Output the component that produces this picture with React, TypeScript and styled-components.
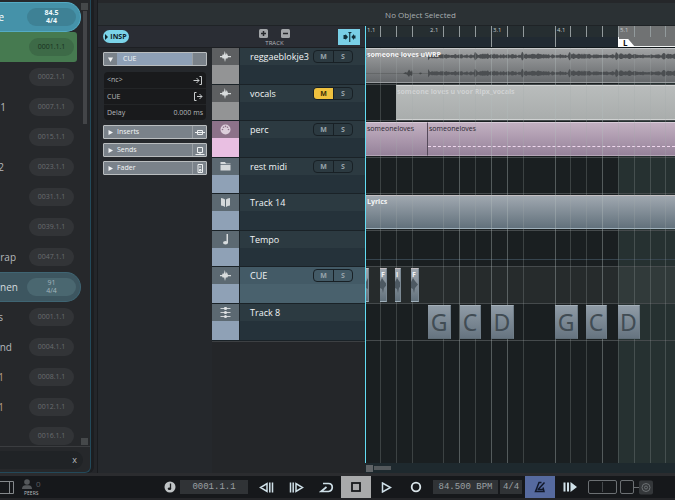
import React from "react";
import styled, { createGlobalStyle, css } from "styled-components";

const GlobalStyle = createGlobalStyle`
  * { box-sizing: border-box; }
  body { margin: 0; background: #24262a; color: #d6dade; font-family: "Open Sans", "Noto Sans", sans-serif; font-size: 9px; line-height: 12px; }
  button, input { font: inherit; color: inherit; margin: 0; padding: 0; border: 0; background: none; }
  button { cursor: pointer; }
  svg { display: block; flex: none; }
`;

/* ---------- shell ---------- */
const Shell = styled.div`
  display: flex;
  flex-direction: column;
  min-height: 100vh;
  overflow: hidden;
`;
const Body = styled.div`
  display: flex;
  flex: 1;
`;
const Main = styled.main`
  display: flex;
  flex-direction: column;
  flex: 1;
  min-width: 0;
  border-left: 1px solid #191b1e;
`;

/* ---------- set list ---------- */
const SetList = styled.aside`
  display: flex;
  flex-direction: column;
  width: 91px;
  margin-right: 6px;
  border: solid #23495a;
  border-width: 0 1px 1px 0;
  border-radius: 0 0 6px 0;
  background: #26282b;
  box-shadow: 3px 0 0 #1c1e21;
`;
const SetBody = styled.div`
  display: flex;
  flex: 1;
`;
const Songs = styled.ul`
  display: flex;
  flex-direction: column;
  width: 81px;
  margin: 0;
  padding: 2px 0 0;
  list-style: none;
`;
const Song = styled.li<{ $kind?: "active" | "next" | "part" }>`
  display: flex;
  align-items: center;
  justify-content: space-between;
  height: 30px;
  padding-right: 7px;
  &:last-child {
    align-items: flex-end;
    height: 23px;
  }
  ${(p) =>
    p.$kind === "active" || p.$kind === "part"
      ? css`
          padding-right: 4px;
          border-radius: 0 15px 15px 0;
          border: 1px solid ${p.$kind === "active" ? "#54abc4" : "#3f6573"};
          border-left: 0;
          background: ${p.$kind === "active" ? "#4592a9" : "#3d5660"};
        `
      : ""}
  ${(p) =>
    p.$kind === "next" &&
    css`
      margin-right: 4px;
      padding-right: 3px;
      border-radius: 0 3px 3px 0;
      background: #467a50;
    `}
`;
const SongName = styled.span<{ $w: number; $tone?: string }>`
  display: flex;
  justify-content: flex-end;
  width: ${(p) => p.$w}px;
  overflow: hidden;
  white-space: nowrap;
  font-size: 10px;
  line-height: 14px;
  color: ${(p) => p.$tone ?? "#b4b8bb"};
`;
const Pill = styled.span<{ $kind?: string }>`
  display: flex;
  align-items: center;
  justify-content: center;
  width: 45px;
  height: 18px;
  border-radius: 9px;
  background: ${(p) => (p.$kind === "next" ? "#3d6a47" : "#323437")};
  color: ${(p) => (p.$kind === "next" ? "#18301e" : "#696c6f")};
  font-size: 7px;
  line-height: 8px;
  text-align: center;
  white-space: pre-line;
  ${(p) =>
    (p.$kind === "active" || p.$kind === "part") &&
    css`
      width: 49px;
      background: ${p.$kind === "active" ? "#3e8195" : "#4a6770"};
      color: ${p.$kind === "active" ? "#f0fafc" : "#a3b6bd"};
      font-weight: ${p.$kind === "active" ? 700 : 400};
    `}
`;
const SetScroll = styled.div`
  display: flex;
  flex-direction: column;
  align-items: center;
  justify-content: space-between;
  width: 7px;
  padding: 3px 0 1px;
`;
const ScrollTop = styled.div`
  display: flex;
  flex-direction: column;
  align-items: center;
  gap: 1px;
`;
const Knob = styled.span`
  width: 7px;
  height: 7px;
  background: #45484a;
`;
const Thumb = styled.span`
  width: 4px;
  height: 113px;
  background: #434548;
`;
const SetFooter = styled.div`
  border-top: 1px solid #3b3d40;
  padding: 4px 7px 3px 0;
  height: 26px;
`;
const ClearBox = styled.div`
  display: flex;
  align-items: center;
  justify-content: flex-end;
  height: 18px;
  padding-right: 6px;
  border-radius: 0 9px 9px 0;
  background: #202326;
  color: #b8bcbf;
`;

/* ---------- header ---------- */
const InfoLine = styled.header`
  display: flex;
  align-items: center;
  justify-content: center;
  height: 26px;
  padding: 2px 0 0 68px;
  border-top: 3px solid #25272a;
  border-bottom: 1px solid #1f2326;
  background: #2b3134;
  color: #a9afb1;
  font-size: 8px;
`;
const Workspace = styled.div`
  display: flex;
  flex: 1;
`;
const ToolStrip = styled.div`
  display: flex;
  align-items: center;
  height: 22px;
  border-bottom: 1px solid #1d1f23;
  background: #2a2d34;
`;

/* ---------- inspector ---------- */
const Inspector = styled.section`
  display: flex;
  flex-direction: column;
  width: 114px;
  background: #25282c;
`;
const InspToggle = styled.button`
  display: flex;
  align-items: center;
  justify-content: center;
  gap: 2px;
  width: 26px;
  height: 13px;
  margin-left: 5px;
  border-radius: 7px;
  background: #7bd3e8;
  color: #0f2228;
  font-size: 7px;
  font-weight: 700;
`;
const InspBody = styled.div`
  display: flex;
  flex-direction: column;
  gap: 4px;
  padding: 4px 5px 0;
`;
const Section = styled.button`
  display: flex;
  align-items: stretch;
  height: 14px;
  border: 1px solid #b9bdbf;
  border-radius: 1px;
  background: #7a828a;
  color: #f2f5f6;
  font-size: 7px;
  line-height: 12px;
`;
const SectionArrow = styled.span`
  display: flex;
  align-items: center;
  justify-content: center;
  width: 13px;
`;
const SectionName = styled.span<{ $open?: boolean }>`
  flex: 1;
  padding-left: ${(p) => (p.$open ? 6 : 0)}px;
  text-align: left;
  background: ${(p) => (p.$open ? "#8ea0b6" : "none")};
`;
const SectionEnd = styled.span`
  display: flex;
  align-items: center;
  justify-content: center;
  width: 14px;
  border-left: 1px solid #9aa0a5;
`;
const Routing = styled.div`
  display: flex;
  flex-direction: column;
  margin: 2px 1px 1px;
  border-radius: 4px;
  background: #191a1c;
  color: #b6b9bb;
  font-size: 7px;
`;
const Route = styled.div`
  display: flex;
  align-items: center;
  justify-content: space-between;
  height: 16px;
  padding: 0 3px;
  & + & { border-top: 1px solid #232527; }
`;

/* ---------- track list ---------- */
const TrackColumn = styled.section`
  display: flex;
  flex-direction: column;
  width: 153px;
  background: #242629;
`;
const TrackTools = styled(ToolStrip)`
  justify-content: space-between;
  padding: 0 5px 0 47px;
`;
const AddRemove = styled.div`
  display: flex;
  flex-direction: column;
  align-items: center;
  gap: 2px;
  padding-top: 2px;
  color: #b2b5b9;
  font-size: 6px;
  line-height: 7px;
`;
const AddRow = styled.div`
  display: flex;
  gap: 13px;
`;
const FollowButton = styled.button`
  display: flex;
  align-items: center;
  justify-content: center;
  width: 22px;
  height: 16px;
  background: #79cfe6;
`;
const Rows = styled.div`
  display: grid;
  grid-template-rows: 37px 36px 37px 36px 37px 36px 37px 37px;
  border-bottom: 1px solid #3d4043;
`;
const TrackRow = styled.div`
  display: flex;
  border-bottom: 1px solid #1a2227;
`;
const TypeCell = styled.div<{ $top: string; $bottom: string }>`
  display: flex;
  justify-content: center;
  width: 28px;
  padding-top: 3px;
  border-right: 1px solid #1c2429;
  background: linear-gradient(${(p) => p.$top} 0 17px, ${(p) => p.$bottom} 17px);
`;
const TrackInfo = styled.div<{ $selected?: boolean }>`
  display: flex;
  align-items: flex-start;
  justify-content: space-between;
  flex: 1;
  padding: 2px 12px 0 10px;
  background: ${(p) =>
    p.$selected
      ? "linear-gradient(#435a66 0 17px, #49616d 17px)"
      : "linear-gradient(#2c3a41 0 17px, #25323a 17px)"};
  color: #f0f3f4;
`;
const TrackName = styled.span`
  line-height: 13px;
`;
const MuteSolo = styled.div`
  display: flex;
  height: 13px;
  border: 1px solid #182025;
  border-radius: 4px;
  overflow: hidden;
`;
const MSButton = styled.button<{ $on?: boolean }>`
  width: 19px;
  background: ${(p) => (p.$on ? "#efc13e" : "transparent")};
  color: ${(p) => (p.$on ? "#3c2f08" : "#98a3aa")};
  font-size: 7px;
  font-weight: 700;
  line-height: 11px;
  & + & { border-left: 1px solid #182025; }
`;

/* ---------- timeline ---------- */
const Timeline = styled.section`
  display: flex;
  flex-direction: column;
  flex: 1;
  min-width: 0;
`;
const Canvas = styled.div`
  position: relative;
  flex: 1;
  overflow: hidden;
  border-left: 1px solid #62dcf2;
  background: #1a1f21;
`;
const RulerBand = styled.div`
  height: 22px;
  border-bottom: 1px solid #11181b;
  background: linear-gradient(#262e31 0 11px, #212a32 11px);
`;
const CycleRuler = styled.div`
  position: absolute;
  top: 0;
  left: 252px;
  right: 0;
  height: 21px;
  border-left: 1px solid #fff;
  border-bottom: 1px solid #f2f4f4;
  background: #707273;
`;
const CycleArea = styled.div`
  position: absolute;
  top: 22px;
  bottom: 0;
  left: 252px;
  right: 0;
  background: #263131;
`;
const Locator = styled.div`
  position: absolute;
  top: 13px;
  left: 252px;
  width: 17px;
  height: 8px;
  padding-left: 5px;
  background: #fff;
  clip-path: polygon(0 0, 60% 0, 100% 100%, 0 100%);
  color: #111;
  font-size: 8px;
  font-weight: 700;
  line-height: 8px;
`;
const BarLabel = styled.span<{ $x: number }>`
  position: absolute;
  top: 0;
  left: ${(p) => p.$x}px;
  color: #c3c9cb;
  font-size: 6px;
  line-height: 9px;
`;
const Tick = styled.i<{ $x: number; $tall?: boolean }>`
  position: absolute;
  top: 0;
  left: ${(p) => p.$x}px;
  width: 1px;
  height: ${(p) => (p.$tall ? 21 : 11)}px;
  background: #929a9c;
`;
const GridLine = styled.i<{ $x: number; $strong?: boolean }>`
  position: absolute;
  top: 22px;
  bottom: 0;
  left: ${(p) => p.$x}px;
  width: 1px;
  background: ${(p) => (p.$strong ? "rgba(180,188,188,0.38)" : "rgba(165,173,173,0.25)")};
`;
const Lane = styled.div<{ $y: number; $h: number; $selected?: boolean }>`
  position: absolute;
  top: ${(p) => p.$y}px;
  left: 0;
  right: 0;
  height: ${(p) => p.$h}px;
  border-bottom: 1px solid #454a4c;
  background: ${(p) => (p.$selected ? "rgba(120,125,125,0.13)" : "none")};
`;
const fills = {
  audio: css`background: linear-gradient(#a0a2a3, #65686b); border-color: #c7c9ca #83878a #9a9da0; color: #f4f4f4;`,
  pale: css`background: linear-gradient(#b9bcbc, #a9adac); border-color: #d3d5d5 #c9cccc #cfd1d1; color: #d0d2d3;`,
  pink: css`background: linear-gradient(#c2b0c1, #96829a); border-color: #d9ccd9 #55495a #b5a4b6; color: #2b2530;`,
  steel: css`background: linear-gradient(#a0a8b0, #62717c); border-color: #c4bfc2 #7b8994 #9fb0bb; color: #f2f4f5;`,
  chord: css`background: linear-gradient(#8f9ba6, #667480); border-color: #a4afb8 #6f7d88 #5e6c76; color: #414c54;`,
};
const Clip = styled.div<{ $x: number; $y: number; $w?: number; $h?: number; $fill: keyof typeof fills }>`
  position: absolute;
  left: ${(p) => p.$x}px;
  top: ${(p) => p.$y}px;
  height: ${(p) => p.$h ?? 34}px;
  ${(p) => (p.$w ? `width: ${p.$w}px; border-width: 1px 1px 1px 0;` : "right: 0; border-width: 1px 0;")}
  border-style: solid;
  overflow: hidden;
  ${(p) => fills[p.$fill]}
`;
const ClipName = styled.span<{ $bold?: boolean }>`
  position: absolute;
  top: 1px;
  left: 1px;
  font-size: 7px;
  line-height: 10px;
  font-weight: ${(p) => (p.$bold ? 700 : 500)};
  white-space: nowrap;
`;
const ChordName = styled.span`
  display: flex;
  align-items: center;
  justify-content: center;
  height: 100%;
  font-family: "Noto Sans", sans-serif;
  font-size: 23px;
  line-height: 30px;
`;
const Notes = styled.div`
  margin-top: 23px;
  border-top: 1px dashed #f0d8ee;
`;
const TempoLine = styled.div`
  position: absolute;
  top: 233px;
  left: 0;
  right: 0;
  height: 1px;
  background: #36444e;
`;
const HScroll = styled.div`
  display: flex;
  align-items: center;
  gap: 1px;
  height: 10px;
  padding-left: 1px;
  background: #1e292e;
`;
const HKnob = styled.span`
  width: 7px;
  height: 7px;
  background: #606467;
`;
const HThumb = styled.span`
  width: 17px;
  height: 4px;
  background: #54595c;
`;

/* ---------- transport ---------- */
const Transport = styled.footer`
  display: flex;
  align-items: center;
  height: 27px;
  border-top: 3px solid #2b2c2f;
  border-bottom: 2px solid #242528;
  background: #16181b;
  color: #cfdde3;
`;
const TransportLeft = styled.div`
  display: flex;
  align-items: center;
  justify-content: space-between;
  width: 178px;
  padding-right: 2px;
`;
const LeftTools = styled.div`
  display: flex;
  align-items: center;
  gap: 8px;
`;
const Peers = styled.div`
  display: flex;
  flex-direction: column;
  align-items: center;
  color: #5b5e61;
  font-size: 8px;
  line-height: 12px;
`;
const PeerCount = styled.span`
  display: flex;
  align-items: center;
  gap: 4px;
`;
const PeerLabel = styled.span`
  color: #b9bcbe;
  font-size: 5px;
  line-height: 6px;
`;
const Field = styled.input<{ $w: number }>`
  && {
    width: ${(p) => p.$w}px;
    height: 14px;
    margin-left: 2px;
    background: #303336;
    color: #9ba0a3;
    font-family: "Liberation Mono", monospace;
    text-align: center;
  }
`;
const TButton = styled.button<{ $tone?: "stop" | "click" }>`
  display: flex;
  align-items: center;
  justify-content: center;
  width: 30px;
  height: 22px;
  background: ${(p) => (p.$tone === "stop" ? "#a9aaab" : p.$tone === "click" ? "#566a9f" : "none")};
`;
const Group = styled.div`
  display: flex;
  align-items: center;
  padding-left: 3px;
`;

/* ---------- icons ---------- */
const WaveIcon = () => (
  <svg width="11" height="11" viewBox="0 0 11 11" fill="#d8dbdc">
    <path d="M0 5H2L3 3L3.800 4L4.800 0L5.800 4L6.800 2L8 5H11V6.200H8L7 8L6 7L5 11L4 7L3 8L2 6.200H0Z" />
  </svg>
);
const DrumIcon = () => (
  <svg width="11" height="11" viewBox="0 0 11 11">
    <circle cx="5.500" cy="5.500" r="5" fill="#dccfdb" />
    <g fill="#8c7289">
      <circle cx="2.500" cy="5.500" r="0.8" /><circle cx="8.500" cy="5.500" r="0.8" />
      <circle cx="3.500" cy="3.300" r="0.8" /><circle cx="7.500" cy="3.300" r="0.8" /><circle cx="5.500" cy="2.400" r="0.8" />
    </g>
  </svg>
);
const FolderIcon = () => (
  <svg width="11" height="11" viewBox="0 0 11 11" fill="#d4d8da">
    <path d="M0.500 1H5L6 2.500H10.500V3.300H0.500ZM0.500 4H10.500V9.500H0.500Z" />
  </svg>
);
const BookIcon = () => (
  <svg width="11" height="11" viewBox="0 0 11 11" fill="#d4d8da">
    <path d="M1 1Q3.500 1 5 2.500V10Q3.500 8.500 1 8.500ZM10 1Q7.500 1 6 2.500V10Q7.500 8.500 10 8.500Z" />
  </svg>
);
const NoteIcon = () => (
  <svg width="11" height="11" viewBox="0 0 11 11" fill="#d8dcde">
    <path d="M6.500 0H8V9H6.500Z" /><ellipse cx="5.500" cy="8.800" rx="2.500" ry="1.800" />
  </svg>
);
const ChordIcon = () => (
  <svg width="11" height="11" viewBox="0 0 11 11" stroke="#cfd3d6" fill="#dfe2e4">
    <path d="M0.500 1.500H10.500M0.500 5.500H10.500M0.500 9.500H10.500" />
    <g stroke="none"><circle cx="5.500" cy="1.500" r="1.600" /><circle cx="5.500" cy="5.500" r="1.600" /><circle cx="5.500" cy="9.500" r="1.500" /></g>
  </svg>
);
const icons = { wave: WaveIcon, drum: DrumIcon, folder: FolderIcon, book: BookIcon, note: NoteIcon, chord: ChordIcon };

const Arrow = ({ down }: { down?: boolean }) => (
  <svg width="5" height="5" viewBox="0 0 5 5" fill="#f0f2f3">
    <path d={down ? "M0 0.500H5L2.500 5Z" : "M0.500 0L5 2.500L0.500 5Z"} />
  </svg>
);
const RouteIcon = ({ out }: { out?: boolean }) => (
  <svg width="10" height="9" viewBox="0 0 10 9" fill="none" stroke="#c9cccd">
    {out ? <path d="M3.500 0.500H1.500V8.500H3.500M4 4.500H9M6.500 2L9 4.500L6.500 7" /> : <path d="M6.500 0.500H8.500V8.500H6.500M0.500 4.500H6M3.500 2L6 4.500L3.500 7" />}
  </svg>
);
const sectionIcons: Record<string, string> = {
  Inserts: "M2.500 2.500H7.500V6.500H2.500ZM0 4.500H10",
  Sends: "M2.500 1.500H7.500V6.500H2.500ZM0.500 8.500H9.500M5 6.500V8.500",
  Fader: "M3 0.500H7.500V8.500H3ZM5 2V4M4.500 5.500H6V7H4.500Z",
};

function noise(i: number) {
  const v = Math.sin(i * 12.9898) * 43758.5453;
  return v - Math.floor(v);
}
function wavePath(mid: number) {
  let top = "";
  let bottom = "";
  for (let i = 62; i < 900; i++) {
    const beat = (i - 62) % 47;
    const a = 0.5 + noise(i) * 1.7 + (beat < 2 ? 2.6 : beat < 22 ? 0.9 : 0.3) - (beat > 44 ? 0.5 : 0);
    top += `L${i} ${(mid - a).toFixed(1)}`;
    bottom = `L${i} ${(mid + a * 0.85).toFixed(1)}` + bottom;
  }
  return `M62 ${mid}${top}${bottom}Z`;
}
const Waveform = () => (
  <svg width="900" height="32" viewBox="0 0 900 32">
    <path d="M0 7.500H62M0 24.500H62" stroke="#5d6062" strokeWidth="0.7" />
    <path d="M37 24.500L40 23L41 24L43 20.500L45 23L46 21L47 24.500L46 27L44 26L43 28L41 25.500ZM53 24L55 23.500L56 24.500L54 25.500Z" fill="#45484a" />
    <path d={wavePath(7.5)} fill="#4b4e51" />
    <path d={wavePath(24.5)} fill="#4b4e51" />
  </svg>
);
const MiniWave = () => (
  <svg width="8" height="32" viewBox="0 0 8 32">
    <path d="M0 13L2 9L4 12L7 15.500L4 19L3 24L2 20L0 19Z" fill="#4d5962" />
  </svg>
);

/* ---------- data ---------- */
type SongData = { name?: string; w?: number; tone?: string; pos: string; kind?: "active" | "next" | "part" };
const songs: SongData[] = [
  { name: "e", w: 4, tone: "#fff", pos: "84.5\n4/4", kind: "active" },
  { pos: "0001.1.1", kind: "next" },
  { pos: "0002.1.1" },
  { name: "1", w: 6, pos: "0007.1.1" },
  { pos: "0015.1.1" },
  { name: "2", w: 4, pos: "0023.1.1" },
  { pos: "0031.1.1" },
  { pos: "0039.1.1" },
  { name: "rap", w: 16, pos: "0047.1.1" },
  { name: "nen", w: 18, tone: "#d5dcdf", pos: "91\n4/4", kind: "part" },
  { name: "s", w: 3, pos: "0001.1.1" },
  { name: "nd", w: 12, pos: "0004.1.1" },
  { name: "1", w: 4, tone: "#b99f88", pos: "0008.1.1" },
  { name: "1", w: 4, tone: "#b99f88", pos: "0012.1.1" },
  { pos: "0016.1.1" },
];
type TrackData = { name: string; icon: keyof typeof icons; top: string; bottom: string; ms?: boolean; muted?: boolean; selected?: boolean };
const blue = { top: "#5c6972", bottom: "#8fa1b6" };
const tracks: TrackData[] = [
  { name: "reggaeblokje3", icon: "wave", top: "#5d5f61", bottom: "#939495", ms: true },
  { name: "vocals", icon: "wave", top: "#5d5f61", bottom: "#939495", ms: true, muted: true },
  { name: "perc", icon: "drum", top: "#8c7289", bottom: "#e9bfe2", ms: true },
  { name: "rest midi", icon: "folder", ...blue, ms: true },
  { name: "Track 14", icon: "book", ...blue },
  { name: "Tempo", icon: "note", ...blue },
  { name: "CUE", icon: "wave", ...blue, ms: true, selected: true },
  { name: "Track 8", icon: "chord", ...blue },
];
const lanes = [
  [22, 37], [59, 36], [95, 37], [132, 36], [168, 37], [205, 36], [241, 37], [278, 37],
];
const beats = [14, 30, 46, 77, 93, 109, 125, 141, 157, 189, 204, 220, 236, 252, 268, 284, 299];
const bars = [
  { n: "1.1", x: 1 }, { n: "2.1", x: 64 }, { n: "3.1", x: 127 }, { n: "4.1", x: 191 }, { n: "5.1", x: 254 },
];
const cues = [
  { x: 0, w: 3, n: "" }, { x: 14, w: 7, n: "F" }, { x: 29, w: 6, n: "i" }, { x: 45, w: 8, n: "F" },
];
const chords = [
  { n: "G", x: 62, w: 23 }, { n: "C", x: 94, w: 21 }, { n: "D", x: 125, w: 23 },
  { n: "G", x: 189, w: 23 }, { n: "C", x: 220, w: 21 }, { n: "D", x: 252, w: 22 },
];

export default function App() {
  return (
    <Shell>
      <GlobalStyle />
      <Body>
        <SetList>
          <SetBody>
            <Songs>
              {songs.map((s, i) => (
                <Song key={i} $kind={s.kind}>
                  <SongName $w={s.w ?? 0} $tone={s.tone}>{s.name}</SongName>
                  <Pill $kind={s.kind}>{s.pos}</Pill>
                </Song>
              ))}
            </Songs>
            <SetScroll>
              <ScrollTop><Knob /><Thumb /></ScrollTop>
              <Knob />
            </SetScroll>
          </SetBody>
          <SetFooter>
            <ClearBox><button aria-label="Clear search">x</button></ClearBox>
          </SetFooter>
        </SetList>

        <Main>
          <InfoLine>No Object Selected</InfoLine>
          <Workspace>
            <Inspector>
              <ToolStrip>
                <InspToggle>
                  <svg width="3" height="6" viewBox="0 0 3 6" fill="#0f2228"><path d="M0 0L3 3L0 6Z" /></svg>
                  INSP
                </InspToggle>
              </ToolStrip>
              <InspBody>
                <Section>
                  <SectionArrow><Arrow down /></SectionArrow>
                  <SectionName $open>CUE</SectionName>
                  <SectionEnd />
                </Section>
                <Routing>
                  <Route><span>&lt;nc&gt;</span><RouteIcon /></Route>
                  <Route><span>CUE</span><RouteIcon out /></Route>
                  <Route><span>Delay</span><span>0.000 ms</span></Route>
                </Routing>
                {Object.keys(sectionIcons).map((n) => (
                  <Section key={n}>
                    <SectionArrow><Arrow /></SectionArrow>
                    <SectionName>{n}</SectionName>
                    <SectionEnd>
                      <svg width="10" height="9" viewBox="0 0 10 9" fill="none" stroke="#eceff0"><path d={sectionIcons[n]} /></svg>
                    </SectionEnd>
                  </Section>
                ))}
              </InspBody>
            </Inspector>

            <TrackColumn>
              <TrackTools>
                <AddRemove>
                  <AddRow>
                    <button aria-label="Add track">
                      <svg width="9" height="9" viewBox="0 0 9 9"><rect width="9" height="9" rx="1.500" fill="#a2a5a8" /><path d="M2 4.500H7M4.500 2V7" stroke="#24272b" strokeWidth="1.500" /></svg>
                    </button>
                    <button aria-label="Remove track">
                      <svg width="9" height="9" viewBox="0 0 9 9"><rect width="9" height="9" rx="1.500" fill="#a2a5a8" /><path d="M2 4.500H7" stroke="#24272b" strokeWidth="1.500" /></svg>
                    </button>
                  </AddRow>
                  TRACK
                </AddRemove>
                <FollowButton aria-label="Divide track list">
                  <svg width="13" height="10" viewBox="0 0 13 10" fill="#12303a">
                    <path d="M0.500 3H2.500V2L5 5L2.500 8V7H0.500ZM5 0H9L7.300 1.500V10H6.200V1.500ZM12.500 3.500H11V2L8.300 5L11 8V6.500H12.500Z" />
                  </svg>
                </FollowButton>
              </TrackTools>
              <Rows>
                {tracks.map((t) => {
                  const Icon = icons[t.icon];
                  return (
                    <TrackRow key={t.name}>
                      <TypeCell $top={t.top} $bottom={t.bottom}><Icon /></TypeCell>
                      <TrackInfo $selected={t.selected}>
                        <TrackName>{t.name}</TrackName>
                        {t.ms && (
                          <MuteSolo>
                            <MSButton $on={t.muted}>M</MSButton>
                            <MSButton>S</MSButton>
                          </MuteSolo>
                        )}
                      </TrackInfo>
                    </TrackRow>
                  );
                })}
              </Rows>
            </TrackColumn>

            <Timeline>
              <Canvas>
                <RulerBand />
                <CycleRuler />
                <CycleArea />
                {beats.map((x) => <Tick key={x} $x={x} $tall={x === 125 || x === 189} />)}
                {bars.map((b) => <BarLabel key={b.n} $x={b.x}>{b.n}</BarLabel>)}
                <Locator>L</Locator>
                {lanes.map(([y, h], i) => <Lane key={y} $y={y} $h={h} $selected={i === 6} />)}
                <TempoLine />
                <Clip $x={0} $y={22} $h={35} $fill="audio">
                  <Waveform />
                  <ClipName $bold>someone loves uWRP</ClipName>
                </Clip>
                <Clip $x={30} $y={59} $h={35} $fill="pale"><ClipName $bold>someone loves u voor Ripx_vocals</ClipName></Clip>
                <Clip $x={0} $y={96} $w={62} $fill="pink"><ClipName>someoneloves</ClipName></Clip>
                <Clip $x={62} $y={96} $fill="pink">
                  <ClipName>someoneloves</ClipName>
                  <Notes />
                </Clip>
                <Clip $x={0} $y={169} $fill="steel"><ClipName $bold>Lyrics</ClipName></Clip>
                {beats.map((x) => <GridLine key={x} $x={x} $strong={[93, 125, 141, 189, 236].includes(x)} />)}
                {cues.map((c) => (
                  <Clip key={c.x} $x={c.x} $y={242} $w={c.w} $fill="steel"><MiniWave /><ClipName $bold>{c.n}</ClipName></Clip>
                ))}
                {chords.map((c) => (
                  <Clip key={c.x} $x={c.x} $y={279} $w={c.w} $fill="chord"><ChordName>{c.n}</ChordName></Clip>
                ))}
              </Canvas>
              <HScroll><HKnob /><HThumb /></HScroll>
            </Timeline>
          </Workspace>
        </Main>
      </Body>

      <Transport>
        <TransportLeft>
          <LeftTools>
            <svg width="14" height="13" viewBox="0 0 14 13" fill="none" stroke="#85898c"><path d="M0 0.500H13.500V12.500H0M9.500 0.500V12.500" /></svg>
            <Peers>
              <PeerCount>
                <svg width="10" height="10" viewBox="0 0 10 10" fill="#55585b"><circle cx="5" cy="3" r="2.800" /><path d="M0 10Q0 6.500 3.500 6.300H6.500Q10 6.500 10 10Z" /></svg>
                0
              </PeerCount>
              <PeerLabel>PEERS</PeerLabel>
            </Peers>
          </LeftTools>
          <svg width="12" height="12" viewBox="0 0 12 12"><circle cx="6" cy="6" r="5.500" fill="#c0c4c6" /><path d="M6.500 2.500V7.500" stroke="#1a1c1f" strokeWidth="1.300" /><ellipse cx="5.500" cy="7.700" rx="1.800" ry="1.300" fill="#1a1c1f" /></svg>
        </TransportLeft>
        <Field $w={68} defaultValue="0001.1.1" aria-label="Position" />
        <Group>
          <TButton aria-label="Rewind">
            <svg width="15" height="11" viewBox="0 0 15 11" fill="none" stroke="#cfe0e8" strokeWidth="1.500"><path d="M8 1.500V9.500L1.500 5.500ZM10.800 0.500V10.500M13.500 0.500V10.500" /></svg>
          </TButton>
          <TButton aria-label="Forward">
            <svg width="15" height="11" viewBox="0 0 15 11" fill="none" stroke="#cfe0e8" strokeWidth="1.500"><path d="M7 1.500V9.500L13.500 5.500ZM4.200 0.500V10.500M1.500 0.500V10.500" /></svg>
          </TButton>
          <TButton aria-label="Cycle">
            <svg width="15" height="11" viewBox="0 0 15 11" fill="none" stroke="#cfe0e8" strokeWidth="1.700"><path d="M4 1.500H9.500C14.500 1.500 14.500 9 9.500 9.500H2L7.500 5" /></svg>
          </TButton>
          <TButton $tone="stop" aria-label="Stop">
            <svg width="10" height="10" viewBox="0 0 10 10"><rect x="1" y="1" width="8" height="8" fill="#a9aaab" stroke="#17191b" strokeWidth="1.800" /></svg>
          </TButton>
          <TButton aria-label="Play">
            <svg width="11" height="11" viewBox="0 0 11 11" fill="none" stroke="#cfe0e8" strokeWidth="1.500"><path d="M1.500 1V10L9.500 5.500Z" /></svg>
          </TButton>
          <TButton aria-label="Record">
            <svg width="12" height="12" viewBox="0 0 12 12" fill="none" stroke="#dbe6eb" strokeWidth="1.800"><circle cx="6" cy="6" r="4.300" /></svg>
          </TButton>
        </Group>
        <Field $w={65} defaultValue="84.500 BPM" aria-label="Tempo" />
        <Field $w={22} defaultValue="4/4" aria-label="Time signature" />
        <Group>
          <TButton $tone="click" aria-label="Metronome">
            <svg width="12" height="12" viewBox="0 0 12 12" fill="none" stroke="#11182a" strokeWidth="1.500"><path d="M4.500 1.500H7.500M5 1.500L1.500 10.500H10L9 6.500M4.500 8L10.500 1.500M3.500 8.500H9" /></svg>
          </TButton>
          <TButton aria-label="Pre-roll">
            <svg width="14" height="10" viewBox="0 0 14 10" fill="#cfe0e8"><path d="M0.500 0.500H2.500V9.500H0.500ZM4 0.500H6V9.500H4ZM7.500 0L14 5L7.500 10Z" /></svg>
          </TButton>
        </Group>
        <Group>
          <svg width="66" height="15" viewBox="0 0 66 15" fill="none" stroke="#6c7073">
            <rect x="0.500" y="0.500" width="28" height="13" rx="1.500" /><path d="M14.500 2V12" stroke="#45494c" />
            <rect x="32.500" y="0.500" width="13" height="13" rx="1.500" /><path d="M46 7.500H51" />
            <rect x="51" y="0.500" width="14" height="14" rx="2" fill="#34373a" stroke="none" />
            <circle cx="58" cy="7.500" r="4" /><circle cx="58" cy="7.500" r="1.500" />
          </svg>
        </Group>
      </Transport>
    </Shell>
  );
}
